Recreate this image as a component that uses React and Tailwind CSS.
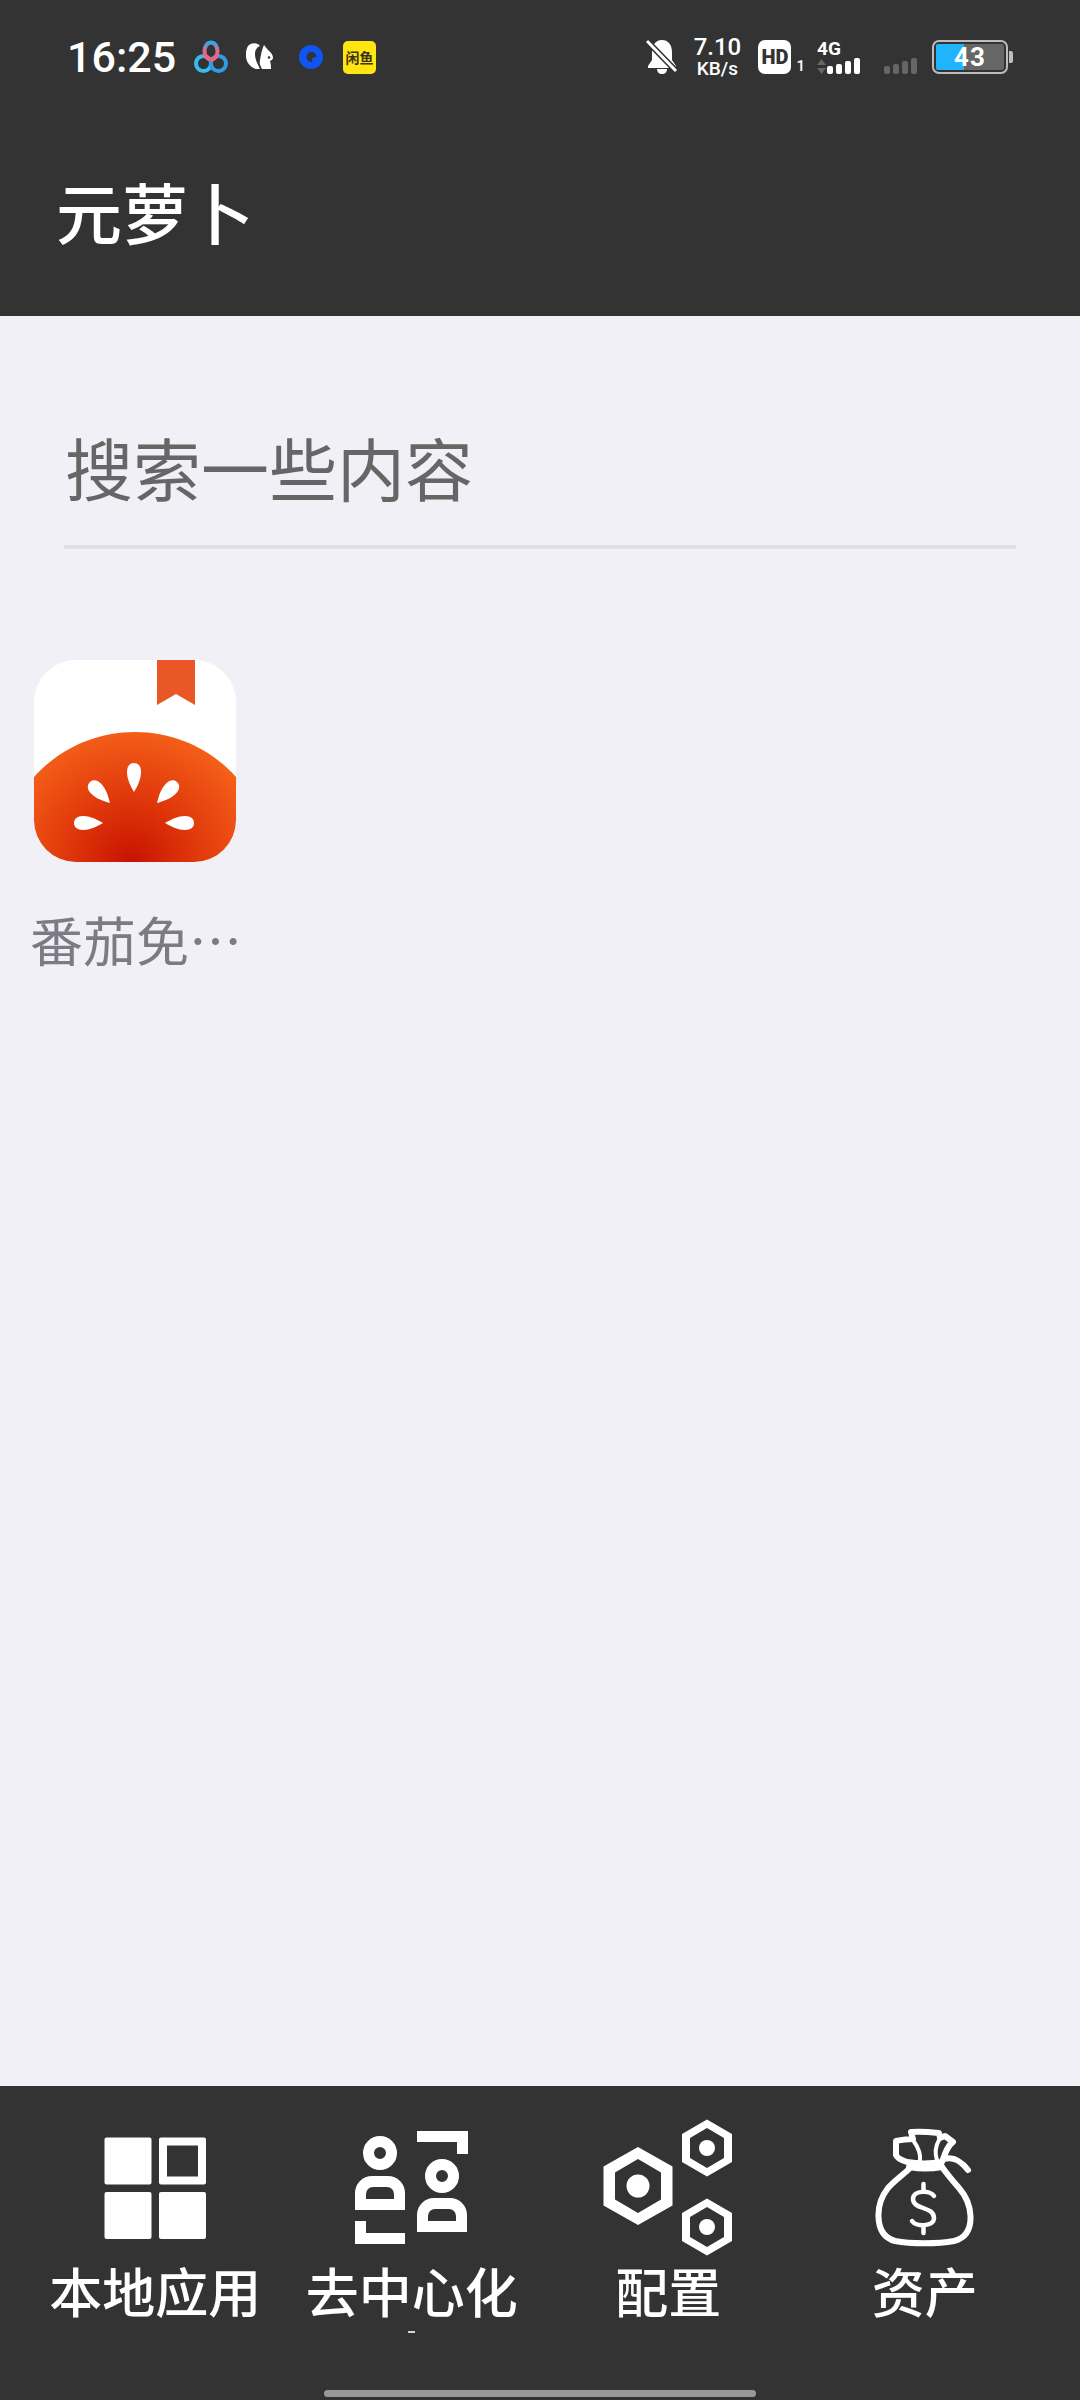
const FONT = "font-['Noto_Sans_CJK_SC','Noto_Sans',sans-serif]";

function BaiduCloud() {
  return (
    <svg width="34" height="34" viewBox="0 0 34 34" fill="none">
      <defs>
        <linearGradient id="ringTop" x1="0" y1="0" x2="0" y2="1">
          <stop offset="0" stopColor="#34a6ea" />
          <stop offset="0.55" stopColor="#f0647f" />
          <stop offset="1" stopColor="#f0647f" />
        </linearGradient>
      </defs>
      <circle cx="9.5" cy="23.5" r="7.5" stroke="#35bdf2" strokeWidth="4" />
      <circle cx="24.5" cy="23.5" r="7.5" stroke="#2f9ce6" strokeWidth="4" />
      <ellipse cx="17" cy="11" rx="6.5" ry="8.5" stroke="url(#ringTop)" strokeWidth="4" />
    </svg>
  );
}

function Squirrel() {
  return (
    <svg width="28" height="28" viewBox="0 0 28 28">
      <path fill="#fff" d="M2 3C6-1 12 0 14 3 11 4 9 7 9 11 9 17 12 21 14 26H10C3 24-1 17 0 10 0 7 1 5 2 3Z" />
      <path fill="#fff" d="M18 2 22 7C25 9 27 12 27 15 27 16 26 17 24 18 25 21 25 24 25 26H16C14 22 13 20 14 17 15 11 16 6 18 2Z" />
      <circle cx="23" cy="14.500" r="1.300" fill="#333" />
    </svg>
  );
}

function BlueDot() {
  return (
    <svg width="24" height="24" viewBox="0 0 24 24">
      <circle cx="12" cy="12" r="12" fill="#0f55f2" />
      <circle cx="12.500" cy="12" r="5" fill="#333" />
      <circle cx="16" cy="15" r="3" fill="#0f55f2" />
    </svg>
  );
}

function BellOff() {
  return (
    <svg width="32" height="36" viewBox="0 0 32 36">
      <path fill="#fff" d="M16 1c7 0 10 6 10 12v8l4 6v2H2v-2l4-6v-8C6 7 9 1 16 1Z" />
      <path fill="#fff" d="M11 30h10c0 3-2 5-5 5s-5-2-5-5Z" />
      <path stroke="#333" strokeWidth="6" d="M0 1 32 34" />
      <path stroke="#fff" strokeWidth="3" d="M1 2 30 32" />
    </svg>
  );
}

function Bars({ color }) {
  return (
    <div className="flex items-end gap-[3px]">
      <div className={`w-[6px] h-[8px] rounded-[2px] ${color}`} />
      <div className={`w-[6px] h-[10px] rounded-[2px] ${color}`} />
      <div className={`w-[6px] h-[13px] rounded-[2px] ${color}`} />
      <div className={`w-[6px] h-[16px] rounded-[2px] ${color}`} />
    </div>
  );
}

function StatusBar() {
  return (
    <div className="h-[114px] flex items-center pl-[67px] pr-[67px]">
      <span className="w-[127px] text-[43px] leading-[50px] font-medium text-white font-['Roboto',sans-serif]">16:25</span>
      <div className="flex items-center">
        <BaiduCloud />
        <div className="ml-[18px]"><Squirrel /></div>
        <div className="ml-[25px]"><BlueDot /></div>
        <div className="ml-[20px] w-[33px] h-[33px] rounded-[5px] bg-[#ffe611] flex items-center justify-center text-[14px] leading-none font-bold text-[#3a3410] whitespace-nowrap">闲鱼</div>
      </div>
      <div className="ml-auto flex items-center">
        <BellOff />
        <div className="ml-[16px] w-[46px] flex flex-col items-center text-white font-['Roboto',sans-serif] font-medium">
          <span className="text-[24px] leading-[24px]">7.10</span>
          <span className="text-[19px] leading-[20px]">KB/s</span>
        </div>
        <div className="ml-[18px] w-[33px] h-[34px] rounded-[7px] bg-white flex items-center justify-center text-[20px] leading-none font-black text-[#333] font-['Roboto',sans-serif]">HD</div>
        <span className="ml-[5px] mt-[18px] text-[15px] leading-none font-medium text-white font-['Roboto',sans-serif]">1</span>
        <div className="ml-[12px] w-[46px] flex flex-col">
          <span className="text-[19px] leading-[18px] font-bold text-white font-['Roboto',sans-serif]">4G</span>
          <div className="flex items-end gap-[1px]">
            <svg width="9" height="15" viewBox="0 0 9 15">
              <path fill="#666" d="M4.500 0 9 6H0ZM0 9h9l-4.500 6Z" />
            </svg>
            <Bars color="bg-white" />
          </div>
        </div>
        <div className="ml-[21px] mt-[18px]"><Bars color="bg-[#666]" /></div>
        <div className="ml-[15px] flex items-center">
          <div className="w-[76px] h-[34px] rounded-[7px] border-2 border-[#bdbdbd] p-[2px]">
            <div className="relative w-full h-full rounded-[2px] bg-[#666] flex items-center justify-center">
              <div className="absolute left-0 top-0 bottom-0 w-[28px] rounded-l-[2px] bg-[#1fb4fb]" />
              <span className="relative text-[26px] leading-none font-bold tracking-[1px] text-white font-['Roboto',sans-serif]">43</span>
            </div>
          </div>
          <div className="ml-[1px] w-[4px] h-[12px] rounded-r-[2px] bg-[#bdbdbd]" />
        </div>
      </div>
    </div>
  );
}

function TomatoIcon() {
  return (
    <div className="w-[202px] h-[202px] rounded-[42px] overflow-hidden bg-white">
      <svg width="202" height="202" viewBox="0 0 202 202" className="block">
        <defs>
          <radialGradient id="tomato" gradientUnits="userSpaceOnUse" cx="97" cy="202" r="160">
            <stop offset="0" stopColor="#c81200" />
            <stop offset="0.45" stopColor="#e23c0c" />
            <stop offset="1" stopColor="#fd6e1e" />
          </radialGradient>
        </defs>
        <path fill="#ea5727" d="M123 0h38v45l-19-11-19 11Z" />
        <path fill="url(#tomato)" d="M0 117C24 90 60 72 101 72s77 18 101 45v85H0Z" />
        <g fill="#fff">
          <path transform="translate(100 132)" d="M0 0C-4-7-7-13-7-20-7-26-4-29 0-29 4-29 7-26 7-20 7-13 4-7 0 0Z" />
          <path transform="translate(76 143) rotate(-44)" d="M0 0C-4-7-7-13-7-20-7-26-4-29 0-29 4-29 7-26 7-20 7-13 4-7 0 0Z" />
          <path transform="translate(123 143) rotate(44)" d="M0 0C-4-7-7-13-7-20-7-26-4-29 0-29 4-29 7-26 7-20 7-13 4-7 0 0Z" />
          <path transform="translate(69 163) rotate(-90)" d="M0 0C-4-7-7-13-7-20-7-26-4-29 0-29 4-29 7-26 7-20 7-13 4-7 0 0Z" />
          <path transform="translate(131 163) rotate(90)" d="M0 0C-4-7-7-13-7-20-7-26-4-29 0-29 4-29 7-26 7-20 7-13 4-7 0 0Z" />
        </g>
      </svg>
    </div>
  );
}

function GridIcon() {
  return (
    <svg width="102" height="102" viewBox="0 0 102 102" fill="#fff">
      <rect x="0.500" y="0.500" width="47" height="47" rx="2" />
      <path fillRule="evenodd" d="M57 .5h43a2 2 0 0 1 2 2v43a2 2 0 0 1-2 2H57a2 2 0 0 1-2-2v-43a2 2 0 0 1 2-2ZM63 8.500v31h31v-31Z" />
      <rect x="0.500" y="55" width="47" height="47" rx="2" />
      <rect x="55" y="55" width="47" height="47" rx="2" />
    </svg>
  );
}

function DecentralIcon() {
  const body = "M1 79V62a17 17 0 0 1 17-17h16a17 17 0 0 1 17 17v17ZM12 68h28v-5a7 7 0 0 0-7-7H19a7 7 0 0 0-7 7Z";
  return (
    <svg width="114" height="113" viewBox="0 0 114 113" fill="#fff" className="-ml-[2px]">
      <circle cx="26" cy="22" r="11.500" fill="none" stroke="#fff" strokeWidth="11" />
      <path fillRule="evenodd" d={body} />
      <path d="M1 90h11v12h39v11H1Z" />
      <circle cx="88" cy="45" r="11.500" fill="none" stroke="#fff" strokeWidth="11" />
      <path fillRule="evenodd" transform="translate(62 22)" d={body} />
      <path d="M63 0h51v23h-11V11H63Z" />
    </svg>
  );
}

function HexIcon() {
  return (
    <svg width="136" height="143" viewBox="0 0 136 143" fill="#fff">
      <path fillRule="evenodd" d="M38 31 72.500 50.500V89.500L38 109 3.500 89.500V50.500ZM38 43 15 56.500V83.500L38 97 61 83.500V56.500Z" />
      <circle cx="38" cy="70" r="11.500" />
      <path fillRule="evenodd" d="M107 3.500 132 18V46L107 60.500 82 46V18ZM107 12 90 22V42L107 52 124 42V22Z" />
      <circle cx="107" cy="32" r="8" />
      <path fillRule="evenodd" d="M107 82.500 132 97V125L107 139.500 82 125V97ZM107 91 90 101V121L107 131 124 121V101Z" />
      <circle cx="107" cy="111" r="8" />
    </svg>
  );
}

function MoneyBagIcon() {
  return (
    <svg width="100" height="120" viewBox="0 0 100 120" fill="none" stroke="#fff" strokeWidth="6" strokeLinecap="round" strokeLinejoin="round">
      <path d="M35 40C28 47 20 52 13 60 6 69 3 79 3.500 89 4 102 9 110 20 113 36 116 63 116 79 113 91 110 96 101 95.500 88 95 76 91 68 84 60 77 52 72 46 67 39" />
      <path d="M34 39C45 41 56 41 67 39" />
      <path d="M32 34C26 32 22 30 21 27L21 13C26 12 33 11 38 11L36 4C45 3 55 4 64 5L65 10 70 8 78 14C72 18 70 26 67 34 55 36 43 36 32 34Z" />
      <path strokeWidth="4" d="M45 33C46 26 43 19 38 12M62 32C60 26 60 19 64 12" />
      <path d="M69 31C79 28 86 33 93 42" />
      <path strokeWidth="4.500" d="M59 68C55 62 38 62 38 71 38 82 59 78 59 90 59 99 41 99 37 93" />
      <path strokeWidth="4.500" d="M48.500 56V62M48.500 99V105" />
    </svg>
  );
}

const TABS = [
  { label: "本地应用", icon: <GridIcon /> },
  { label: "去中心化", icon: <DecentralIcon />, clipped: true },
  { label: "配置", icon: <HexIcon /> },
  { label: "资产", icon: <MoneyBagIcon /> },
];

export default function App() {
  return (
    <div className={`w-[1080px] h-[2400px] flex flex-col bg-[#f0f0f6] ${FONT}`}>
      <header className="h-[316px] bg-[#333333]">
        <StatusBar />
        <h1 className="mt-[56px] pl-[56px] text-[66px] leading-[80px] font-medium text-white">元萝卜</h1>
      </header>

      <main className="flex-1">
        <div className="mx-[64px] mt-[107px] h-[126px] border-b-[4px] border-[#e0e0e4] pl-[1px]">
          <span className="text-[68px] leading-[88px] text-[#666666]">搜索一些内容</span>
        </div>

        <div className="w-[210px] ml-[30px] mt-[111px]">
          <div className="ml-[4px]"><TomatoIcon /></div>
          <p className="mt-[39px] text-[53px] leading-[76px] text-[#7b7b86] whitespace-nowrap">番茄免⋯</p>
        </div>
      </main>

      <nav className="h-[314px] bg-[#333333] flex flex-col">
        <div className="grid grid-cols-4 px-[27px] pt-[30px]">
          {TABS.map(tab => (
            <div key={tab.label} className="flex flex-col items-center">
              <div className="h-[143px] flex items-center justify-center">{tab.icon}</div>
              <span className="mt-[1px] text-[53px] leading-[60px] font-medium text-white whitespace-nowrap">{tab.label}</span>
              {tab.clipped && <div className="mt-[11px] w-[7px] h-[2px] bg-white/80" />}
            </div>
          ))}
        </div>
        <div className="mt-auto mb-[3px] mx-auto w-[432px] h-[7px] rounded-full bg-[#999999]" />
      </nav>
    </div>
  );
}
